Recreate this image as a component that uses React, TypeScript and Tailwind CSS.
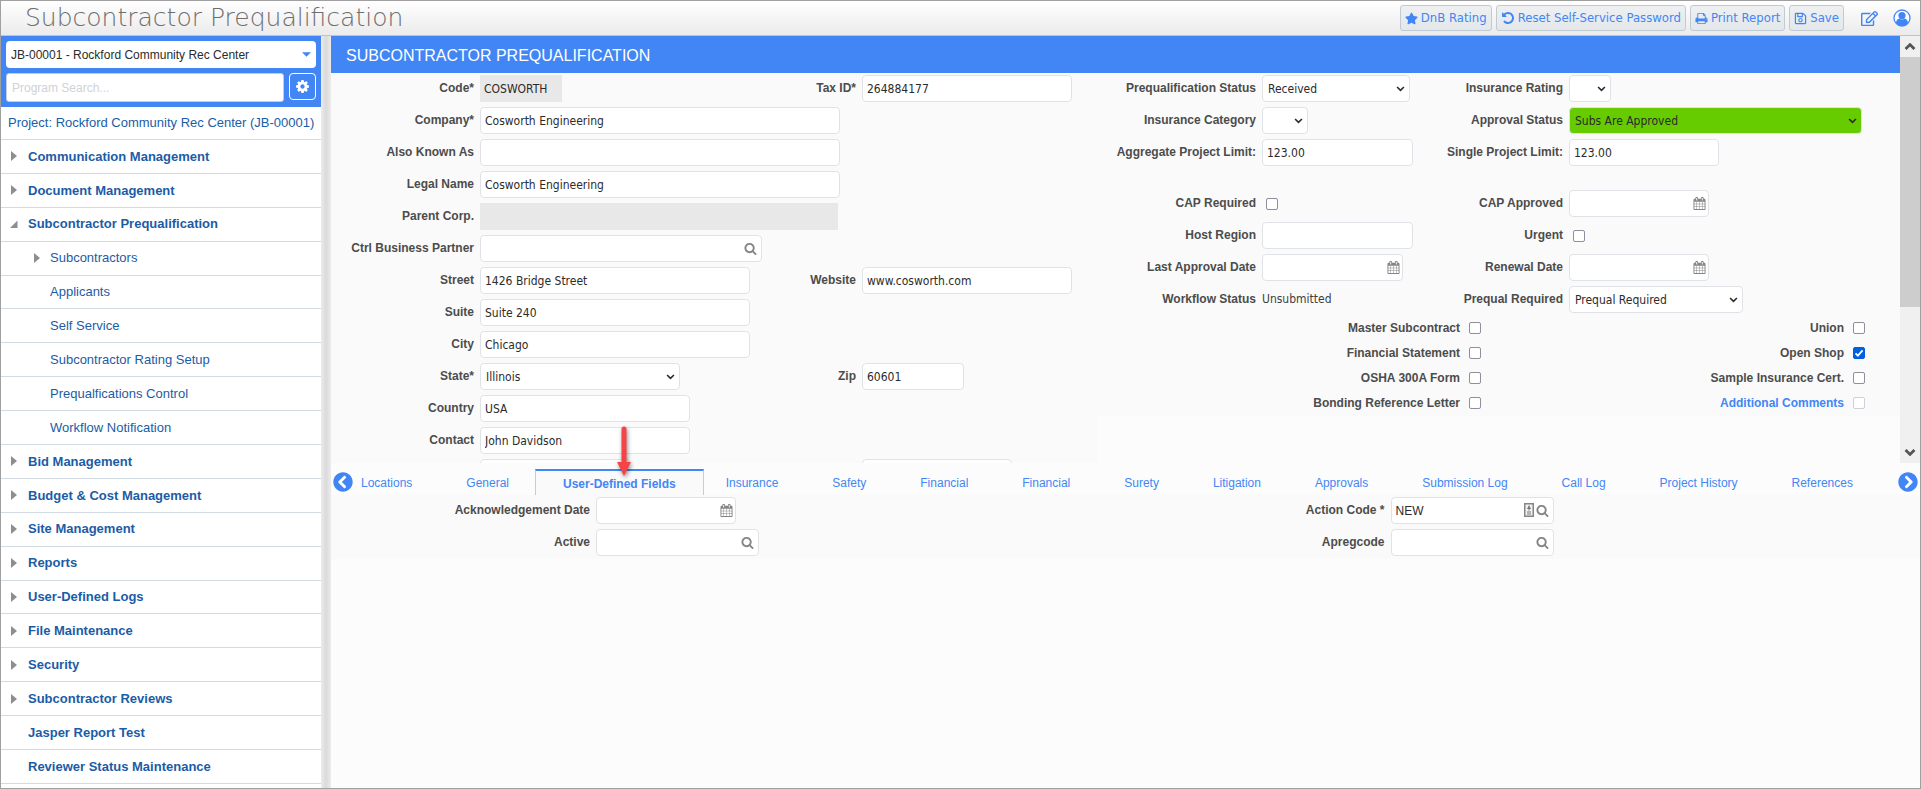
import React, { useId } from "react";
import { FaChevronCircleLeft, FaChevronCircleRight, FaRegEdit, FaRegSave, FaStar } from "react-icons/fa";

const GLYPHS = {
  calendar:
    "M192 1664h288v-288h-288v288zm352 0h320v-288h-320v288zm-352-352h288v-320h-288v320zm352 0h320v-320h-320v320zm-352-384h288v-288h-288v288zm736 736h320v-288h-320v288zm-384-736h320v-288h-320v288zm768 736h288v-288h-288v288zm-384-352h320v-320h-320v320zm-352-864v-288q0-13-9.5-22.5t-22.5-9.5h-64q-13 0-22.5 9.5t-9.5 22.5v288q0 13 9.5 22.5t22.5 9.5h64q13 0 22.5-9.5t9.5-22.5zm736 864h288v-320h-288v320zm-384-384h320v-288h-320v288zm384 0h288v-288h-288v288zm32-480v-288q0-13-9.5-22.5t-22.5-9.5h-64q-13 0-22.5 9.5t-9.5 22.5v288q0 13 9.5 22.5t22.5 9.5h64q13 0 22.5-9.5t9.5-22.5zm384-64v1280q0 52-38 90t-90 38h-1408q-52 0-90-38t-38-90v-1280q0-52 38-90t90-38h128v-96q0-66 47-113t113-47h64q66 0 113 47t47 113v96h384v-96q0-66 47-113t113-47h64q66 0 113 47t47 113v96h128q52 0 90 38t38 90z",
  search:
    "M1216 832q0-185-131.5-316.5t-316.5-131.5-316.5 131.5-131.5 316.5 131.5 316.5 316.5 131.5 316.5-131.5 131.5-316.5zm512 832q0 52-38 90t-90 38q-54 0-90-38l-343-342q-179 124-399 124-143 0-273.5-55.5t-225-150-150-225-55.5-273.5 55.5-273.5 150-225 225-150 273.5-55.5 273.5 55.5 225 150 150 225 55.5 273.5q0 220-124 399l343 343q37 37 37 90z",
  print:
    "M448 1536h896v-256h-896v256zm0-640h896v-384h-160q-40 0-68-28t-28-68v-160h-640v640zm1152 64q0-26-19-45t-45-19-45 19-19 45 19 45 45 19 45-19 19-45zm128 0v416q0 13-9.5 22.5t-22.5 9.5h-224v160q0 40-28 68t-68 28h-960q-40 0-68-28t-28-68v-160h-224q-13 0-22.5-9.5t-9.5-22.5v-416q0-79 56.5-135.5t135.5-56.5h64v-544q0-40 28-68t68-28h672q40 0 88 20t76 48l152 152q28 28 48 76t20 88v256h64q79 0 135.5 56.5t56.5 135.5z",
  undo:
    "M1664 896q0 156-61 298t-164 245-245 164-298 61q-172 0-327-72.5t-264-204.5q-7-10-6.5-22.5t8.5-20.5l137-138q10-9 25-9 16 2 23 12 73 95 179 147t225 52q104 0 198.5-40.5t163.5-109.5 109.5-163.5 40.5-198.5-40.5-198.5-109.5-163.5-163.5-109.5-198.5-40.5q-98 0-188 35.5t-160 101.5l137 138q31 30 14 69-17 40-59 40h-448q-26 0-45-19t-19-45v-448q0-42 40-59 39-17 69 14l130 129q107-101 244.5-156.5t284.5-55.5q156 0 298 61t245 164 164 245 61 298z",
  cog:
    "M1152 896q0-106-75-181t-181-75-181 75-75 181 75 181 181 75 181-75 75-181zm512-109v222q0 12-8 23t-20 13l-185 28q-19 54-39 91 35 50 107 138 10 12 10 25t-9 23q-27 37-99 108t-94 71q-12 0-26-9l-138-108q-44 23-91 38-16 136-29 186-7 28-36 28h-222q-14 0-24.5-8.5t-11.5-21.5l-28-184q-49-16-90-37l-141 107q-10 9-25 9-14 0-25-11-126-114-165-168-7-10-7-23 0-12 8-23 15-21 51-66.5t54-70.5q-27-50-41-99l-183-27q-13-2-21-12.5t-8-23.5v-222q0-12 8-23t19-13l186-28q14-46 39-92-40-57-107-138-10-12-10-24 0-10 9-23 26-36 98.5-107.5t94.5-71.5q13 0 26 10l138 107q44-23 91-38 16-136 29-186 7-28 36-28h222q14 0 24.5 8.5t11.5 21.5l28 184q49 16 90 37l142-107q9-9 24-9 13 0 25 10 129 119 165 170 7 8 7 22 0 12-8 23-15 21-51 66.5t-54 70.5q26 50 41 98l183 28q13 2 21 12.5t8 23.5z",
};

function Glyph({ name, className }: { name: keyof typeof GLYPHS; className: string }) {
  return (
    <svg viewBox="0 0 1792 1792" fill="currentColor" className={className} aria-hidden="true">
      <path d={GLYPHS[name]} />
    </svg>
  );
}

function Chevron({ className }: { className: string }) {
  return (
    <svg viewBox="0 0 10 6" fill="none" stroke="currentColor" strokeWidth="1.8" className={className} aria-hidden="true">
      <path d="M1.2 0.8 5 4.6 8.8 0.8" />
    </svg>
  );
}

function UserBadge() {
  return (
    <svg viewBox="0 0 18 18" className="size-[18px]" aria-hidden="true">
      <circle cx="9" cy="9" r="8" fill="#fff" stroke="#4286f5" strokeWidth="1.3" />
      <circle cx="9" cy="6.6" r="3.6" fill="#4286f5" />
      <path d="M2.8 14c.5-2.800 1.900-4.100 3.500-4.500a4.500 4.500 0 0 0 5.400 0c1.600.4 3 1.700 3.500 4.500A8 8 0 0 1 9 17a8 8 0 0 1-6.200-3z" fill="#4286f5" />
    </svg>
  );
}

function ContactCard() {
  return (
    <svg viewBox="0 0 10 14" className="h-[14px] w-[10px]" aria-hidden="true">
      <rect x="0.75" y="0.75" width="8.5" height="12.5" fill="#f2f2f2" stroke="#858585" strokeWidth="1.5" />
      <path d="M5 2.5v5M3.500 5.500 5 3.500l1.500 2zM3 9h4M3 11h4" fill="#777" stroke="#777" strokeWidth="1" />
    </svg>
  );
}

const LABEL = "shrink-0 text-right text-[12px] leading-[14px] font-bold whitespace-nowrap text-[#4c4c4c]";
const BOX =
  "block h-[27px] w-full rounded-[4px] border border-[#dfe3e8] bg-white font-['DejaVu_Sans_Condensed','DejaVu_Sans',sans-serif] text-[12px] leading-4 text-[#2b2b2b] outline-none";

type FieldProps = {
  label: string;
  labelWidth: string;
  width: string;
  value?: string;
  kind?: "text" | "select" | "readonly" | "date" | "lookup" | "card";
  tone?: "plain" | "green";
  arial?: boolean;
};

function Field({ label, labelWidth, width, value = "", kind = "text", tone = "plain", arial }: FieldProps) {
  const id = useId();
  return (
    <div className="flex h-8 min-w-0 items-center gap-[6px] pb-px">
      <label htmlFor={id} className={`${LABEL} ${labelWidth} pb-px`}>
        {label}
      </label>
      <div className={`relative shrink-0 ${width}`}>
        {kind === "select" ? (
          <>
            <select
              id={id}
              defaultValue={value}
              className={`${BOX} appearance-none pr-5 pl-[5px] ${tone === "green" ? "!bg-[#66cc00]" : ""}`}
            >
              <option>{value}</option>
            </select>
            <Chevron className="pointer-events-none absolute top-[11px] right-[5px] h-[6px] w-[9px] text-[#2b2b2b]" />
          </>
        ) : kind === "readonly" ? (
          <input
            id={id}
            readOnly
            defaultValue={value}
            className={`${BOX} !rounded-none !border-[#e8e8e8] !bg-[#e8e8e8] px-[3px]`}
          />
        ) : (
          <input
            id={id}
            defaultValue={value}
            className={`${BOX} px-1 ${arial ? "!font-['Liberation_Sans',Arial,sans-serif]" : ""}`}
          />
        )}
        {kind === "date" && (
          <button aria-label={`${label} calendar`} className="absolute top-[7px] right-[3px] text-[#858585]">
            <Glyph name="calendar" className="size-[13px]" />
          </button>
        )}
        {(kind === "lookup" || kind === "card") && (
          <div className="absolute top-[6px] right-[5px] flex h-[14px] items-center gap-[2px] text-[#858585]">
            {kind === "card" && (
              <button aria-label={`${label} details`}>
                <ContactCard />
              </button>
            )}
            <button aria-label={`${label} search`}>
              <Glyph name="search" className="size-[13px]" />
            </button>
          </div>
        )}
      </div>
    </div>
  );
}

function BareField({ name, indent, width }: { name: string; indent: string; width: string }) {
  return (
    <div className="flex h-8 min-w-0 items-center gap-[6px] pb-px">
      <span className={`shrink-0 ${indent}`} />
      <div className={`shrink-0 ${width}`}>
        <input aria-label={name} className={`${BOX} px-1`} />
      </div>
    </div>
  );
}

function CheckBox({ id, checked, faint }: { id: string; checked?: boolean; faint?: boolean }) {
  return (
    <span className="relative block size-3">
      <input
        id={id}
        type="checkbox"
        defaultChecked={checked}
        disabled={faint}
        className={`peer block size-3 appearance-none rounded-[2px] border bg-white checked:border-[#0060df] checked:bg-[#0060df] ${faint ? "border-[#cfcfd6]" : "border-[#8f8f9d]"}`}
      />
      <svg
        viewBox="0 0 12 12"
        fill="none"
        stroke="#fff"
        strokeWidth="1.8"
        className="pointer-events-none absolute inset-0 hidden size-3 peer-checked:block"
        aria-hidden="true"
      >
        <path d="M2.5 6.3 4.9 8.7 9.6 3.3" />
      </svg>
    </span>
  );
}

function InlineCheck({ label, labelWidth }: { label: string; labelWidth: string }) {
  const id = useId();
  return (
    <div className="flex h-8 items-center gap-[10px] pb-px">
      <label htmlFor={id} className={`${LABEL} ${labelWidth} pb-px`}>
        {label}
      </label>
      <CheckBox id={id} />
    </div>
  );
}

function EndCheck({ label, checked, link }: { label: string; checked?: boolean; link?: boolean }) {
  const id = useId();
  return (
    <div className="flex h-[25px] items-center justify-end gap-[9px] pb-px">
      <label htmlFor={id} className={`${LABEL} ${link ? "!text-[#4286f5]" : ""}`}>
        {label}
      </label>
      <CheckBox id={id} checked={checked} faint={link} />
    </div>
  );
}

type NavItem = { label: string; level: 0 | 1; marker: "closed" | "open" | "none" };

const NAV: NavItem[] = [
  { label: "Communication Management", level: 0, marker: "closed" },
  { label: "Document Management", level: 0, marker: "closed" },
  { label: "Subcontractor Prequalification", level: 0, marker: "open" },
  { label: "Subcontractors", level: 1, marker: "closed" },
  { label: "Applicants", level: 1, marker: "none" },
  { label: "Self Service", level: 1, marker: "none" },
  { label: "Subcontractor Rating Setup", level: 1, marker: "none" },
  { label: "Prequalfications Control", level: 1, marker: "none" },
  { label: "Workflow Notification", level: 1, marker: "none" },
  { label: "Bid Management", level: 0, marker: "closed" },
  { label: "Budget & Cost Management", level: 0, marker: "closed" },
  { label: "Site Management", level: 0, marker: "closed" },
  { label: "Reports", level: 0, marker: "closed" },
  { label: "User-Defined Logs", level: 0, marker: "closed" },
  { label: "File Maintenance", level: 0, marker: "closed" },
  { label: "Security", level: 0, marker: "closed" },
  { label: "Subcontractor Reviews", level: 0, marker: "closed" },
  { label: "Jasper Report Test", level: 0, marker: "none" },
  { label: "Reviewer Status Maintenance", level: 0, marker: "none" },
];

function Marker({ kind }: { kind: NavItem["marker"] }) {
  return (
    <svg viewBox="0 0 8 10" className="h-[10px] w-2 shrink-0" fill="#8b8f92" aria-hidden="true">
      {kind === "closed" && <path d="M1 0 7 5 1 10z" />}
      {kind === "open" && <path d="M7.5 1.5V9H0z" />}
    </svg>
  );
}

function Sidebar() {
  return (
    <aside className="flex w-80 shrink-0 flex-col bg-white">
      <div className="flex flex-col gap-[5px] bg-[#4286f5] p-[5px]">
        <div className="relative">
          <select
            aria-label="Project"
            className="block h-[27px] w-full appearance-none rounded-[4px] bg-white px-[5px] text-[12px] text-[#2b2b2b]"
          >
            <option>JB-00001 - Rockford Community Rec Center</option>
          </select>
          <svg viewBox="0 0 8 4" className="pointer-events-none absolute top-[11px] right-[5px] h-[5px] w-[9px]" fill="#4286f5" aria-hidden="true">
            <path d="M0 0h8L4 4z" />
          </svg>
        </div>
        <div className="flex gap-[5px]">
          <input
            aria-label="Program search"
            placeholder="Program Search..."
            className="h-[29px] min-w-0 flex-1 rounded-[3px] border border-[#c4cdd8] bg-white px-[5px] text-[12px] placeholder:text-[#cfd3d6]"
          />
          <button
            aria-label="Settings"
            className="flex size-[27px] items-center justify-center rounded-[4px] border border-white text-white"
          >
            <Glyph name="cog" className="size-[15px]" />
          </button>
        </div>
      </div>
      <a href="#project" className="flex h-[33px] shrink-0 items-center border-b border-[#d2dbe4] px-[7px] text-[13px] whitespace-nowrap text-[#1b5ca6]">
        Project: Rockford Community Rec Center (JB-00001)
      </a>
      <nav className="flex flex-1 flex-col pb-1">
        {NAV.map((item) => (
          <a
            key={item.label}
            href="#program"
            className={`flex min-h-[28px] flex-1 items-center border-b border-[#d2dbe4] text-[13px] whitespace-nowrap text-[#1b5ca6] ${
              item.level === 0 ? "gap-[10px] pl-[9px] font-bold" : "gap-[9px] pl-8"
            }`}
          >
            <Marker kind={item.marker} />
            {item.label}
          </a>
        ))}
      </nav>
    </aside>
  );
}

const HEADER_BUTTON =
  "flex h-[26px] items-center gap-[3px] rounded-[3px] border border-[#c0cad3] bg-linear-to-b from-[#eef0f2] to-[#e4e8ea] px-1 font-['DejaVu_Sans_Condensed','DejaVu_Sans',sans-serif] text-[13px] whitespace-nowrap text-[#4286f5]";

function Header() {
  return (
    <header className="flex h-[35px] shrink-0 items-center justify-between border-b border-[#c4c4c4] bg-linear-to-b from-white to-[#ebebeb] pr-[9px] pl-6">
      <h1 className="font-['DejaVu_Sans_Light','DejaVu_Sans',sans-serif] text-[25px] leading-8 font-extralight whitespace-nowrap text-[#6e6e6e]">
        Subcontractor Prequalification
      </h1>
      <div className="flex items-center gap-1">
        <button className={HEADER_BUTTON}>
          <FaStar className="size-[13px]" />
          DnB Rating
        </button>
        <button className={HEADER_BUTTON}>
          <Glyph name="undo" className="size-[14px]" />
          Reset Self-Service Password
        </button>
        <button className={HEADER_BUTTON}>
          <Glyph name="print" className="size-[13px]" />
          Print Report
        </button>
        <button className={HEADER_BUTTON}>
          <FaRegSave className="size-[13px]" />
          Save
        </button>
        <button aria-label="Edit" className="ml-[13px] text-[#4286f5]">
          <FaRegEdit className="size-[17px]" />
        </button>
        <button aria-label="Account" className="ml-[11px]">
          <UserBadge />
        </button>
      </div>
    </header>
  );
}

const L1 = "w-[143px]";
const L2 = "w-[55px]";
const R1 = "w-[158px]";
const R2 = "w-[141px]";

function CompanyForm() {
  const pair = "grid grid-cols-[470fr_297fr]";
  return (
    <div className="bg-[#fafafa]">
      <div className={pair}>
        <Field label="Code*" labelWidth={L1} width="w-[82px]" value="COSWORTH" kind="readonly" />
        <Field label="Tax ID*" labelWidth={L2} width="w-[210px]" value="264884177" />
      </div>
      <Field label="Company*" labelWidth={L1} width="w-[360px]" value="Cosworth Engineering" />
      <Field label="Also Known As" labelWidth={L1} width="w-[360px]" />
      <Field label="Legal Name" labelWidth={L1} width="w-[360px]" value="Cosworth Engineering" />
      <Field label="Parent Corp." labelWidth={L1} width="w-[358px]" kind="readonly" />
      <Field label="Ctrl Business Partner" labelWidth={L1} width="w-[282px]" kind="lookup" />
      <div className={pair}>
        <Field label="Street" labelWidth={L1} width="w-[270px]" value="1426 Bridge Street" />
        <Field label="Website" labelWidth={L2} width="w-[210px]" value="www.cosworth.com" />
      </div>
      <Field label="Suite" labelWidth={L1} width="w-[270px]" value="Suite 240" />
      <Field label="City" labelWidth={L1} width="w-[270px]" value="Chicago" />
      <div className={pair}>
        <Field label="State*" labelWidth={L1} width="w-[200px]" value="Illinois" kind="select" />
        <Field label="Zip" labelWidth={L2} width="w-[102px]" value="60601" />
      </div>
      <Field label="Country" labelWidth={L1} width="w-[210px]" value="USA" />
      <Field label="Contact" labelWidth={L1} width="w-[210px]" value="John Davidson" />
      <div className={pair}>
        <BareField name="Phone" indent={L1} width="w-[150px]" />
        <BareField name="Fax" indent={L2} width="w-[150px]" />
      </div>
    </div>
  );
}

function StatusForm() {
  const pair = "grid grid-cols-[324fr_478fr]";
  return (
    <div>
      <div className="bg-[#fafafa]">
        <div className={pair}>
          <Field label="Prequalification Status" labelWidth={R1} width="w-[148px]" value="Received" kind="select" />
          <Field label="Insurance Rating" labelWidth={R2} width="w-[42px]" kind="select" />
          <Field label="Insurance Category" labelWidth={R1} width="w-[46px]" kind="select" />
          <Field label="Approval Status" labelWidth={R2} width="w-[293px]" value="Subs Are Approved" kind="select" tone="green" />
          <Field label="Aggregate Project Limit:" labelWidth={R1} width="w-[151px]" value="123.00" />
          <Field label="Single Project Limit:" labelWidth={R2} width="w-[150px]" value="123.00" />
        </div>
        <div className={`${pair} pt-[19px]`}>
          <InlineCheck label="CAP Required" labelWidth={R1} />
          <Field label="CAP Approved" labelWidth={R2} width="w-[140px]" kind="date" />
          <Field label="Host Region" labelWidth={R1} width="w-[151px]" />
          <InlineCheck label="Urgent" labelWidth={R2} />
          <Field label="Last Approval Date" labelWidth={R1} width="w-[141px]" kind="date" />
          <Field label="Renewal Date" labelWidth={R2} width="w-[140px]" kind="date" />
          <div className="flex h-8 items-center gap-[6px] pb-[2px]">
            <span className={`${LABEL} ${R1}`}>Workflow Status</span>
            <span className="font-['DejaVu_Sans_Condensed','DejaVu_Sans',sans-serif] text-[12px] leading-[14px] text-[#3f3f3f]">
              Unsubmitted
            </span>
          </div>
          <Field label="Prequal Required" labelWidth={R2} width="w-[174px]" value="Prequal Required" kind="select" />
        </div>
        <div className="grid grid-cols-[383fr_384fr_35fr]">
          <div>
            <EndCheck label="Master Subcontract" />
            <EndCheck label="Financial Statement" />
            <EndCheck label="OSHA 300A Form" />
            <EndCheck label="Bonding Reference Letter" />
          </div>
          <div>
            <EndCheck label="Union" />
            <EndCheck label="Open Shop" checked />
            <EndCheck label="Sample Insurance Cert." />
            <EndCheck label="Additional Comments" link />
          </div>
        </div>
      </div>
    </div>
  );
}

function ScrollRail() {
  return (
    <div className="flex w-5 shrink-0 flex-col bg-[#f0f0f0] text-[#555]">
      <button aria-label="Scroll up" className="flex h-[21px] items-center justify-center">
        <Chevron className="h-[7px] w-3 rotate-180 stroke-[2.4]" />
      </button>
      <div className="flex-1">
        <div className="h-[65%] bg-[#cdcdcd]" />
      </div>
      <button aria-label="Scroll down" className="flex h-[21px] items-center justify-center">
        <Chevron className="h-[7px] w-3 stroke-[2.4]" />
      </button>
    </div>
  );
}

const TABS_BEFORE = ["Locations", "General"];
const TABS_AFTER = [
  "Insurance",
  "Safety",
  "Financial",
  "Financial",
  "Surety",
  "Litigation",
  "Approvals",
  "Submission Log",
  "Call Log",
  "Project History",
  "References",
];

function RedArrow() {
  return (
    <svg
      viewBox="0 0 20 54"
      className="pointer-events-none absolute -top-[46px] left-1/2 z-10 -ml-[5px] h-[54px] w-5 drop-shadow-[1px_2px_2px_rgba(0,0,0,0.45)]"
      aria-hidden="true"
    >
      <path d="M7.500 4a2.500 2.500 0 0 1 5 0v33H17L10 51 3 37h4.500z" fill="#f64346" />
    </svg>
  );
}

function Tabs() {
  const tab = "h-full pt-[2px] text-[12px] leading-[14px] whitespace-nowrap text-[#4286f5]";
  return (
    <div className="flex h-8 items-center pt-[6px] pr-[2px] pl-[2px]">
      <button aria-label="Previous tabs" className="rounded-full bg-white text-[#4286f5]">
        <FaChevronCircleLeft className="size-5" />
      </button>
      <div role="tablist" className="flex h-full min-w-0 flex-1 items-stretch justify-between pr-[45px] pl-2">
        {TABS_BEFORE.map((name) => (
          <button key={name} role="tab" className={tab}>
            {name}
          </button>
        ))}
        <button
          role="tab"
          aria-selected="true"
          className={`${tab} relative -mr-8 -ml-7 border-x border-t-2 border-x-[#c3cdd8] border-t-[#4286f5] bg-[#fafafa] px-[27px] font-bold`}
        >
          User-Defined Fields
          <RedArrow />
        </button>
        {TABS_AFTER.map((name, i) => (
          <button key={i} role="tab" className={tab}>
            {name}
          </button>
        ))}
      </div>
      <button aria-label="Next tabs" className="rounded-full bg-white text-[#4286f5]">
        <FaChevronCircleRight className="size-5" />
      </button>
    </div>
  );
}

export default function App() {
  return (
    <div className="flex min-h-screen flex-col border border-[#a0a0a0] bg-[#fcfcfc] font-['Liberation_Sans',Arial,sans-serif]">
      <Header />
      <div className="flex flex-1">
        <Sidebar />
        <div className="w-[10px] shrink-0 bg-linear-to-r from-[#ececec] via-[#dadada] to-[#ececec]" />
        <main className="flex min-w-0 flex-1 flex-col">
          <section className="flex h-[427px] shrink-0 overflow-hidden">
            <div className="min-w-0 flex-1 overflow-hidden">
              <h2 className="flex h-[37px] items-center bg-[#4286f5] px-[15px] pt-[2px] text-[16px] text-white">
                SUBCONTRACTOR PREQUALIFICATION
              </h2>
              <div className="grid grid-cols-[767fr_802fr]">
                <CompanyForm />
                <StatusForm />
              </div>
            </div>
            <ScrollRail />
          </section>
          <Tabs />
          <section className="grid grid-cols-2 bg-[#fafafa]">
            <div>
              <Field label="Acknowledgement Date" labelWidth="w-[259px]" width="w-[140px]" kind="date" />
              <Field label="Active" labelWidth="w-[259px]" width="w-[163px]" kind="lookup" />
            </div>
            <div>
              <Field label="Action Code *" labelWidth="w-[259px]" width="w-[163px]" kind="card" value="NEW" arial />
              <Field label="Apregcode" labelWidth="w-[259px]" width="w-[163px]" kind="lookup" />
            </div>
          </section>
        </main>
      </div>
    </div>
  );
}
